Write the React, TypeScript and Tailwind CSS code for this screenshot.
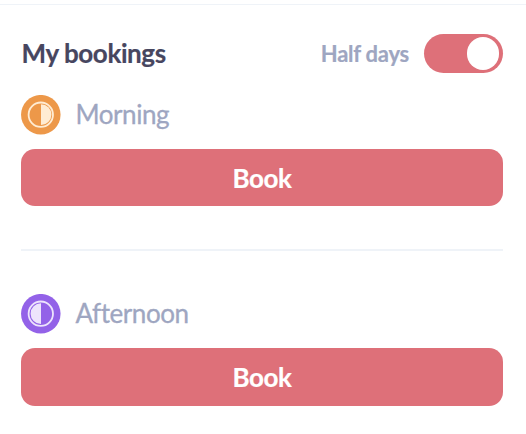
import React, { useState } from 'react';

interface BookingSlotProps {
  label: string;
  half: 'morning' | 'afternoon';
  buttonClass: string;
}

const HalfDayIcon: React.FC<{ half: 'morning' | 'afternoon' }> = ({ half }) => {
  const isMorning = half === 'morning';
  const bg = isMorning ? '#ed9849' : '#9362e8';
  const fg = isMorning ? '#ffecd3' : '#ede4fc';

  return (
    <svg className="w-10 h-10 shrink-0" viewBox="0 0 40 40" fill="none" aria-hidden="true">
      <circle cx="19.8" cy="19.7" r="19.75" fill={bg} />
      <circle cx="19.8" cy="19.7" r="12.2" stroke={fg} strokeWidth="1.8" />
      <path d={isMorning ? 'M20 9.3a10.4 10.4 0 0 1 0 20.8z' : 'M20 9.3a10.4 10.4 0 0 0 0 20.8z'} fill={fg} />
    </svg>
  );
};

const BookingSlot: React.FC<BookingSlotProps> = ({ label, half, buttonClass }) => (
  <section>
    <div className="flex items-center h-10 gap-[14.5px]">
      <HalfDayIcon half={half} />
      <span className="pb-0.5 text-[26px] leading-[38px] tracking-[-0.45px] text-[#9ea6c1] [-webkit-text-stroke:0.3px_#9ea6c1]">{label}</span>
    </div>
    <button className={`mt-3.5 w-full rounded-[14px] bg-[#de7079] text-[26px] font-bold tracking-[-0.4px] text-white cursor-pointer [-webkit-text-stroke:0.2px_white] ${buttonClass}`}>
      Book
    </button>
  </section>
);

export default function App() {
  const [halfDays, setHalfDays] = useState(true);

  return (
    <div className="h-[434px] bg-white pt-1 font-['Lato',sans-serif]">
      <div className="border-t border-[#eff3f8] pl-[21px] pr-[23px] pt-[29px]">
        <header className="flex items-center justify-between h-[39px]">
          <h1 className="pl-[0.5px] pb-px text-[26px] leading-[38px] font-bold tracking-[-0.4px] text-[#47465f] [-webkit-text-stroke:0.2px_#47465f]">My bookings</h1>
          <div className="flex items-center gap-[15px]">
            <span className="text-[22px] font-bold tracking-[-0.25px] text-[#9ea6c1] [-webkit-text-stroke:0.2px_#9ea6c1]">Half days</span>
            <button
              role="switch"
              aria-checked={halfDays}
              aria-label="Half days"
              onClick={() => setHalfDays(!halfDays)}
              className={`flex items-center w-[79px] h-[39px] rounded-full px-1 cursor-pointer ${halfDays ? 'justify-end bg-[#de7079]' : 'justify-start bg-[#9ea6c1]'}`}
            >
              <span className="w-8 h-[33px] rounded-full bg-white" />
            </button>
          </div>
        </header>

        <div className="mt-[22px]">
          <BookingSlot label="Morning" half="morning" buttonClass="h-[57px] pt-px" />
        </div>
        <hr className="mt-[43px] mb-[43px] border-t-2 border-[#eff3f8]" />
        <BookingSlot label="Afternoon" half="afternoon" buttonClass="h-[58px]" />
      </div>
    </div>
  );
}
